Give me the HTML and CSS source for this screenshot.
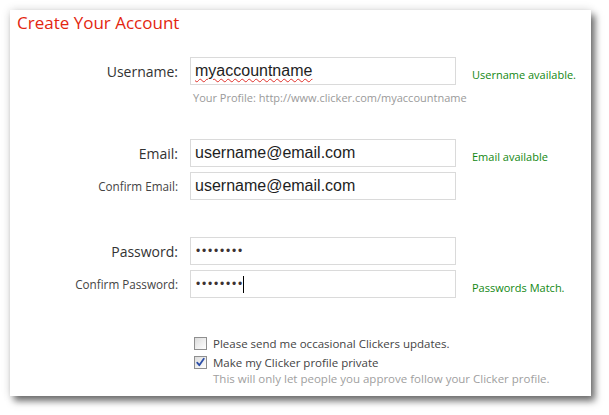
FILE: index.html
```html
<!DOCTYPE html>
<html>
<head>
<meta charset="utf-8">
<link rel="stylesheet" href="styles.css">
</head>
<body>
<div class="panel">
  <h1 class="title">Create Your Account</h1>
  <div class="form">
    <div class="row row-user">
      <div class="label">Username:</div>
      <div class="field"><span class="spell">myaccountname</span></div>
      <div class="status">Username available.</div>
    </div>
    <div class="hint">Your Profile: http://www.clicker.com/myaccountname</div>

    <div class="row row-email">
      <div class="label">Email:</div>
      <div class="field">username@email.com</div>
      <div class="status">Email available</div>
    </div>
    <div class="row row-pair">
      <div class="label small">Confirm Email:</div>
      <div class="field">username@email.com</div>
      <div class="status"></div>
    </div>

    <div class="row row-pass">
      <div class="label">Password:</div>
      <div class="field dots">••••••••</div>
      <div class="status"></div>
    </div>
    <div class="row row-pair">
      <div class="label small">Confirm Password:</div>
      <div class="field dots">••••••••<span class="caret"></span></div>
      <div class="status">Passwords Match.</div>
    </div>

    <div class="checks">
      <div class="check">
        <span class="box"></span>
        <span class="check-text">Please send me occasional Clickers updates.</span>
      </div>
      <div class="check check-on">
        <span class="box"><svg viewBox="0 0 11 11" width="11" height="11"><path d="M2.2 5.6 L4.3 8.2 L8.8 1.8" fill="none" stroke="#2d4fa8" stroke-width="1.8" stroke-linecap="round" stroke-linejoin="round"/></svg></span>
        <span class="check-text">Make my Clicker profile private</span>
      </div>
      <div class="check-sub">This will only let people you approve follow your Clicker profile.</div>
    </div>
  </div>
</div>
</body>
</html>
```

FILE: styles.css
```css
html, body {
  margin: 0;
  padding: 0;
  background: #ffffff;
  height: 100%;
}

body {
  font-family: "Open Sans", "Noto Sans", sans-serif;
  color: #333;
  padding-top: 10px;
  box-sizing: border-box;
}

.panel {
  margin: 0 0 0 10px;
  width: 581px;
  height: 386px;
  background: #fff;
  box-shadow: 4px 5px 7px rgba(0, 0, 0, 0.55), 0 0 9px rgba(0, 0, 0, 0.14);
  overflow: hidden;
}

.title {
  margin: 0;
  padding: 2px 0 0 7px;
  font-weight: normal;
  font-size: 17px;
  line-height: 22px;
  color: #e3260f;
}

.form {
  padding-top: 23px;
}

.row {
  display: grid;
  grid-template-columns: 168px 266px 1fr;
  column-gap: 12px;
  align-items: center;
  height: 28px;
}

.row-email {
  margin-top: 34px;
}

.row-pair {
  margin-top: 5px;
}

.row-pass {
  margin-top: 37px;
}

.label {
  text-align: right;
  font-size: 14px;
  color: #333;
}

.label.small {
  font-size: 11.7px;
  color: #444;
}

.field {
  box-sizing: border-box;
  height: 28px;
  border: 1px solid #dadada;
  padding: 0 0 0 4px;
  font-family: "Liberation Sans", Arial, sans-serif;
  font-size: 16px;
  line-height: 26px;
  color: #1e1e1e;
  white-space: nowrap;
}

.spell {
  text-decoration: underline wavy #e0302a;
  text-decoration-thickness: 1px;
  text-underline-offset: 2px;
}

.dots {
  font-size: 12px;
  letter-spacing: 1.8px;
  color: #3c3232;
  padding-left: 5px;
}

.caret {
  display: inline-block;
  width: 1px;
  height: 17px;
  background: #000;
  vertical-align: middle;
  margin-left: -1px;
}

.status {
  padding-left: 4px;
  padding-top: 6px;
  font-size: 11px;
  color: #128812;
}

.hint {
  margin: 6px 0 0 183px;
  font-size: 11px;
  line-height: 14px;
  color: #9a9a9a;
}

.checks {
  margin: 36px 0 0 184px;
}

.check {
  display: flex;
  align-items: center;
  height: 19px;
  font-size: 11.5px;
  color: #444;
}

.box {
  box-sizing: border-box;
  width: 13px;
  height: 13px;
  border: 1px solid #8f8f8f;
  background: linear-gradient(135deg, #dcdcdc, #ffffff);
  margin-right: 6px;
  display: flex;
  align-items: center;
  justify-content: center;
}

.check-sub {
  padding-left: 19px;
  font-size: 11.5px;
  line-height: 13px;
  color: #a0a0a0;
}
```
